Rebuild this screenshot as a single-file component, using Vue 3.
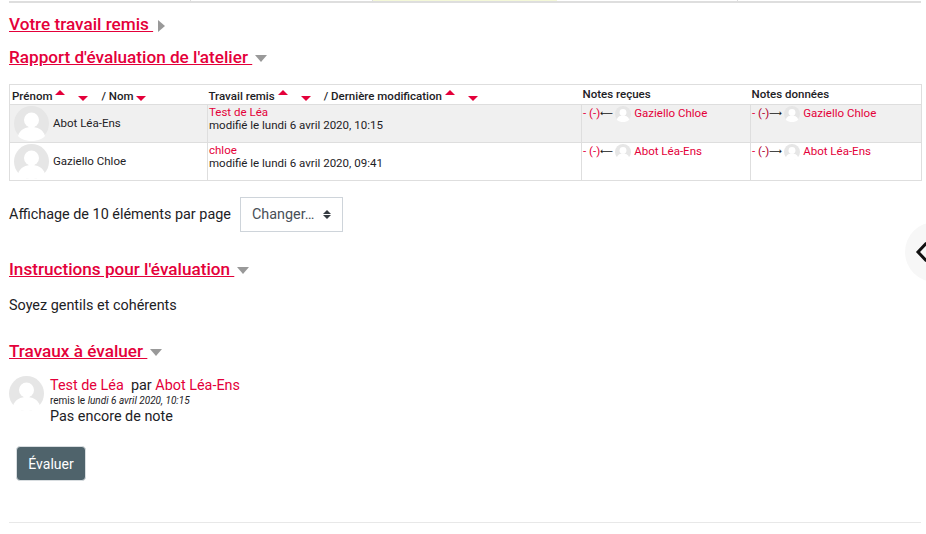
<script setup>
const rows = [
  { name: 'Abot Léa-Ens', work: 'Test de Léa', date: 'modifié le lundi 6 avril 2020, 10:15', peer: 'Gaziello Chloe', shade: true },
  { name: 'Gaziello Chloe', work: 'chloe', date: 'modifié le lundi 6 avril 2020, 09:41', peer: 'Abot Léa-Ens', shade: false },
]
</script>

<template>
  <div class="page">
    <div class="strip">
      <div class="c1"></div>
      <div class="c2"></div>
      <div class="c3"></div>
      <div class="c4"></div>
    </div>

    <div class="content">
      <h3 class="head first"><a>Votre travail remis </a><span class="tri right"></span></h3>
      <h3 class="head second"><a>Rapport d'évaluation de l'atelier </a><span class="tri down"></span></h3>

      <table class="report">
        <colgroup>
          <col class="w1" /><col class="w2" /><col class="w3" /><col class="w4" />
        </colgroup>
        <thead>
          <tr>
            <th>
              <span class="hcell">Prénom<span class="up"></span><span class="dn"></span><span class="sl">/ Nom</span><span class="dn tight"></span></span>
            </th>
            <th>
              <span class="hcell">Travail remis<span class="up"></span><span class="dn"></span><span class="sl">/ Dernière modification</span><span class="up"></span><span class="dn"></span></span>
            </th>
            <th class="plain">Notes reçues</th>
            <th class="plain">Notes données</th>
          </tr>
        </thead>
        <tbody>
          <tr v-for="r in rows" :key="r.name" :class="{ shade: r.shade }">
            <td class="who">
              <span class="wrap">
                <svg class="avatar big" viewBox="0 0 35 35"><circle cx="17.5" cy="17.5" r="17.5" fill="#e6e6e6" /><circle cx="17.5" cy="14" r="7.5" fill="#fff" /><path d="M4 30c2-7 8-9 13.500-9S29 23 31 30c-3 3.500-8 5-13.500 5S7 33.500 4 30z" fill="#fff" /></svg>
                <span>{{ r.name }}</span>
              </span>
            </td>
            <td class="sub">
              <a>{{ r.work }}</a><br />{{ r.date }}
            </td>
            <td class="grade">
              <div class="gline">
                <span class="mark">- (-)</span><span class="arrow">⟵</span><svg class="avatar small" viewBox="0 0 35 35"><circle cx="17.5" cy="17.5" r="17.5" fill="#e6e6e6" /><circle cx="17.500" cy="14" r="7.5" fill="#fff" /><path d="M4 30c2-7 8-9 13.500-9S29 23 31 30c-3 3.500-8 5-13.500 5S7 33.500 4 30z" fill="#fff" /></svg><a class="peer">{{ r.peer }}</a>
              </div>
            </td>
            <td class="grade">
              <div class="gline">
                <span class="mark">- <span class="dark">(-)</span></span><span class="arrow">⟶</span><svg class="avatar small" viewBox="0 0 35 35"><circle cx="17.5" cy="17.5" r="17.5" fill="#e6e6e6" /><circle cx="17.500" cy="14" r="7.5" fill="#fff" /><path d="M4 30c2-7 8-9 13.500-9S29 23 31 30c-3 3.500-8 5-13.500 5S7 33.500 4 30z" fill="#fff" /></svg><a class="peer">{{ r.peer }}</a>
              </div>
            </td>
          </tr>
        </tbody>
      </table>

      <div class="perpage">
        <span>Affichage de 10 éléments par page</span>
        <div class="select">
          <span>Changer…</span>
          <span class="carets"><i class="cu"></i><i class="cd"></i></span>
        </div>
      </div>

      <h3 class="head third"><a>Instructions pour l'évaluation </a><span class="tri down"></span></h3>
      <p class="instr">Soyez gentils et cohérents</p>

      <h3 class="head fourth"><a>Travaux à évaluer </a><span class="tri down"></span></h3>

      <div class="item">
        <svg class="avatar item-av" viewBox="0 0 35 35"><circle cx="17.5" cy="17.5" r="17.5" fill="#e6e6e6" /><circle cx="17.500" cy="14" r="7.5" fill="#fff" /><path d="M4 30c2-7 8-9 13.500-9S29 23 31 30c-3 3.500-8 5-13.500 5S7 33.500 4 30z" fill="#fff" /></svg>
        <div class="item-body">
          <div class="t1"><a>Test de Léa</a>&nbsp; par <a>Abot Léa-Ens</a></div>
          <div class="t2">remis le <em>lundi 6 avril 2020, 10:15</em></div>
          <div class="t3">Pas encore de note</div>
        </div>
      </div>

      <button class="btn">Évaluer</button>
      <hr class="rule" />
    </div>

    <div class="drawer"><svg width="14" height="22" viewBox="0 0 14 22"><path d="M11.500 2 3 11l8.500 9" fill="none" stroke="#111" stroke-width="3" /></svg></div>
  </div>
</template>

<style>
html, body { margin: 0; background: #fff; overflow: hidden; }
</style>

<style scoped>
.page {
  position: relative;
  width: 926px;
  height: 534px;
  overflow: hidden;
  font-family: Roboto, "Liberation Sans", sans-serif;
  color: #1d2125;
  font-size: 14.4px;
}
.strip {
  display: grid;
  grid-template-columns: 182px 182px 184px 181px 182px;
  margin-left: 9px;
  width: 912px;
  height: 3px;
  border-bottom: 2px solid #dedede;
  box-sizing: border-box;
}
.strip div { border-right: 1px solid #dedede; }
.strip .c3 { background: #f4f8d8; border-right: 0; }
.content { padding: 0 5px 0 9px; }
a { color: #e4003a; }
.head {
  margin: 0;
  font-size: 17.15px;
  line-height: 22px;
  font-weight: 500;
  color: #e4003a;
}
.head a { text-decoration: underline; white-space: pre; }
.tri { display: inline-block; vertical-align: middle; }
.tri.right { border-left: 7px solid #999; border-top: 6px solid transparent; border-bottom: 6px solid transparent; margin-left: 5px; margin-top: 1px; }
.tri.down { border-top: 7px solid #999; border-left: 6px solid transparent; border-right: 6px solid transparent; margin-left: 3px; margin-top: 0; }
.first { margin-top: 10px; }
.second { margin-top: 11px; }
.report {
  margin-top: 16px;
  border-collapse: collapse;
  table-layout: fixed;
  width: 912px;
  font-size: 11.52px;
  line-height: 13px;
}
.w1 { width: 198px; } .w2 { width: 374px; } .w3 { width: 169px; } .w4 { width: 171px; }
.report th, .report td { border: 1px solid #dedede; padding: 0 2px; vertical-align: top; font-weight: 400; box-sizing: border-box; }
.report th { height: 20px; font-weight: 500; text-align: left; white-space: nowrap; padding: 0 1px; border-left: 0; border-right: 0; }
.report th:first-child { border-left: 1px solid #dedede; padding-left: 2px; }
.report th:last-child { border-right: 1px solid #dedede; }
.report th.plain { padding-top: 3px; padding-bottom: 0; }
.hcell { display: flex; align-items: center; height: 19px; padding-top: 4px; box-sizing: border-box; }
.up, .dn { display: inline-block; width: 0; height: 0; border-left: 5px solid transparent; border-right: 5px solid transparent; flex: none; }
.up { border-bottom: 5px solid #e4003a; margin: -9px 0 0 3px; }
.dn { border-top: 5px solid #e4003a; margin: 3px 13px 0 13px; }
.dn.tight { margin-left: 2px; margin-right: 0; }
.sl { white-space: nowrap; }
.report tbody tr { height: 38px; }
.shade td { background: #f0f0f0; }
.who { padding: 0 2px 0 4px !important; vertical-align: middle !important; }
.wrap { display: flex; align-items: center; gap: 4px; }
.avatar { display: block; flex: none; }
.big { width: 35px; height: 35px; }
.sub { padding: 1px 1px 0 1px !important; }
.grade { padding: 1px 1px 0 1px !important; white-space: nowrap; }
.gline { display: flex; align-items: flex-start; }
.gline > span, .gline > a { margin-top: 1px; }
.small { width: 16px; height: 16px; margin: 0 3px 0 3px; }
.mark { color: #e4003a; }
.dark { color: #b0002f; }
.arrow { color: #111; font-family: "DejaVu Sans", sans-serif; font-size: 9px; width: 12px; text-align: center; }
.perpage { display: flex; align-items: center; gap: 9px; margin-top: 16px; }
.select {
  display: flex;
  align-items: center;
  justify-content: space-between;
  box-sizing: border-box;
  width: 103px;
  height: 35px;
  padding: 0 11px 0 11px;
  border: 1px solid #ced4da;
  color: #495057;
}
.carets { display: flex; flex-direction: column; gap: 1px; }
.cu, .cd { display: block; width: 0; height: 0; border-left: 4px solid transparent; border-right: 4px solid transparent; }
.cu { border-bottom: 4px solid #343a40; }
.cd { border-top: 4px solid #343a40; }
.third { margin-top: 26px; }
.instr { margin: 16px 0 0; line-height: 20px; }
.fourth { margin-top: 24px; }
.item { display: flex; gap: 6px; margin-top: 14px; }
.item-av { width: 35px; height: 35px; }
.item-body { padding-top: 1px; }
.t1 { line-height: 17px; }
.t2 { font-size: 10px; line-height: 14px; }
.t3 { line-height: 18px; }
.btn {
  display: block;
  margin: 20px 0 0 7px;
  width: 70px;
  height: 35px;
  background: #4f636b;
  color: #fff;
  font-family: inherit;
  font-size: 14px;
  border: 1px solid #d8dde0;
  border-radius: 4px;
}
.rule { margin: 41px 0 0; border: 0; border-top: 1px solid #e8e8e8; width: 912px; }
.drawer {
  position: absolute;
  left: 905px;
  top: 222px;
  width: 60px;
  height: 60px;
  border-radius: 50%;
  background: #f7f7f7;
  display: flex;
  align-items: center;
  padding-left: 10px;
  box-sizing: border-box;
}
</style>
